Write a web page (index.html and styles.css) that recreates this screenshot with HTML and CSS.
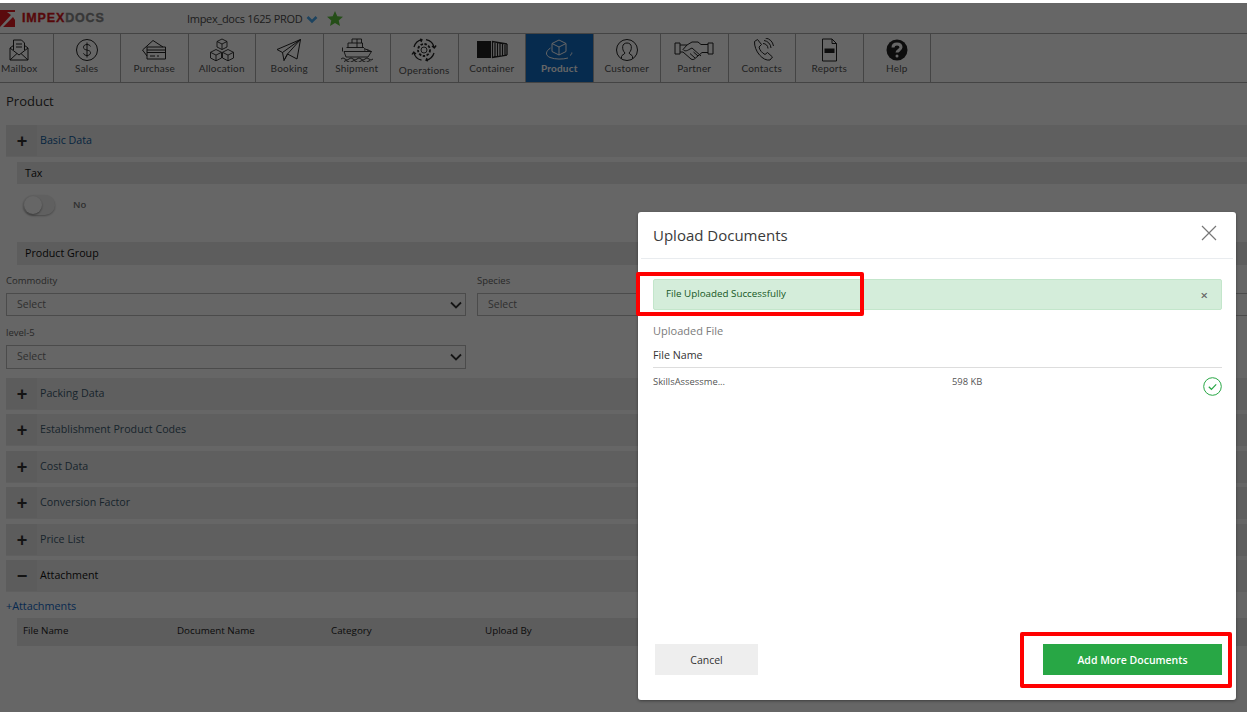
FILE: index.html
```html
<!DOCTYPE html>
<html lang="en">
<head>
<meta charset="utf-8">
<title>Product</title>
<link rel="stylesheet" href="styles.css">
</head>
<body>
<div class="page">
  <header class="topbar">
    <div class="logo">
      <svg class="logo-mark" width="15" height="17" viewBox="0 0 15 17"><path fill="#e01b22" d="M0 0h15v17H0z"/><path fill="#fff" d="M0 17 11 5 7 2h8v8l-2-3L3 17z"/></svg>
      <span class="logo-text"><b class="logo-red">IMPEX</b><b class="logo-grey">DOCS</b></span>
    </div>
    <div class="tenant">Impex_docs 1625 PROD</div>
    <svg class="chev" width="12" height="9" viewBox="0 0 12 9"><path d="M1.500 2 6 6.500 10.500 2" fill="none" stroke="#4aa8ee" stroke-width="2.600"/></svg>
    <svg class="star" width="16" height="15" viewBox="0 0 16 15"><path fill="#5cc43c" d="M8 0l2.300 5.200 5.700.5-4.300 3.700L13 15 8 12l-5 3 1.300-5.600L0 5.700l5.700-.5z"/></svg>
  </header>

  <nav class="nav">
    <a class="nav-item"><svg class="ic" viewBox="0 0 36 24"><path d="M9 10v12h18V10l-4-3M13 7l-4 3 9 7 9-7M9 22l7-6.500M27 22l-7-6.500M12.500 12V2h8l3 3v7M15 6h6M15 9h6"/></svg><span>Mailbox</span></a>
    <a class="nav-item"><svg class="ic" viewBox="0 0 36 24"><circle cx="18" cy="12" r="10.500"/><path d="M21.500 8.500c-.5-1.300-2-2-3.500-2-2 0-3.500 1-3.500 2.800 0 3.800 7 1.800 7 5.400 0 1.800-1.600 2.800-3.500 2.800-1.600 0-3-.8-3.500-2.200M18 4.500v15"/></svg><span>Sales</span></a>
    <a class="nav-item"><svg class="ic" viewBox="0 0 36 24"><path d="M11 18l-4.500-6L17 2.500 27 9M11 9h18.500v12H11zM11 12h18.500M11 14.500h18.500M14 18h5M21 18h2"/></svg><span>Purchase</span></a>
    <a class="nav-item"><svg class="ic ic-thin" viewBox="0 0 36 24"><path d="M18 1l5 2.500V9l-5 2.500L13 9V3.500zM13 3.500l5 2.500 5-2.500M18 6v5.500M12 11.500l5.500 2.800v5.700L12 22.800l-5.500-2.800v-5.700zM6.500 14.300l5.500 2.800 5.500-2.800M12 17.100v5.700M24 11.500l5.500 2.800v5.700L24 22.800 18.500 20v-5.700zM18.500 14.300l5.500 2.800 5.500-2.800M24 17.100v5.700"/></svg><span>Allocation</span></a>
    <a class="nav-item"><svg class="ic" viewBox="0 0 36 24"><path d="M6 11.500L29.500 1.500 26 21l-9.500-5-3.500 6.500-1.500-8zM11.500 14.500L29.500 1.500 16.500 16M13 22.500l3.500-6.500"/></svg><span>Booking</span></a>
    <a class="nav-item"><svg class="ic ic-thin" viewBox="0 0 36 24"><path d="M13 5V1h5v4M18 1h4.500v4M9 9.500V5h9v4.500M18 5h5.500v4.500M7.500 9.500h17.500M3.500 9.500v4M5 13.500h27.500L29 19H7zM25 10.500l7.500 3M25 12h1.500M28 12h1.500"/><path d="M2 21q2-2.200 4 0t4 0 4 0 4 0 4 0 4 0 4 0 4 0M5 23.500q2-2 4 0t4 0 4 0 4 0 4 0 4 0 2 0"/></svg><span>Shipment</span></a>
    <a class="nav-item nav-low"><svg class="ic ic-thin" viewBox="0 0 36 24"><circle cx="18" cy="12" r="3"/><circle cx="18" cy="12" r="6" stroke-width="1.800" stroke-dasharray="2.500 1.500"/><path stroke-width="1.300" d="M20 1.700A10.500 10.500 0 0 1 28.300 10M28 15a10.500 10.500 0 0 1-8 7.300M15.500 22.200A10.500 10.500 0 0 1 7.700 14M8 9a10.500 10.500 0 0 1 8-7.300M26 8l2.300 2 1.800-2.500M22 22.800l-2-.5 1-2.300M10 16l-2.300-2L6 16.500M14 1l2 .7-1 2.300"/></svg><span>Operations</span></a>
    <a class="nav-item"><svg class="ic ic-thin" viewBox="0 0 36 24"><path class="solid" d="M3 3h14v17H3z"/><path stroke-width="1.300" d="M18.500 3v17M21 3.500v16M23.500 4v15M26 4.500v14M28.500 5v13M31 5.500v12M33 6v11M18 3.500l15 2.500M18 19.500l15-2.500"/></svg><span>Container</span></a>
    <a class="nav-item nav-active"><svg class="ic ic-light" viewBox="0 0 36 24"><path d="M18 2l7 3.500v8L18 17l-7-3.500v-8zM11 5.500l7 3.500 7-3.500M18 9v8"/><path stroke-width="1" d="M9.500 10C5 13 3.500 17 9 19.500c5 2 13 2 18 .5M29 17.500c1.500-1 2-2 1.800-3"/></svg><span>Product</span></a>
    <a class="nav-item"><svg class="ic" viewBox="0 0 36 24"><circle cx="18" cy="12" r="10.500"/><path d="M12.500 20.500v-2c0-1.500 3-2 3.500-3.500-2-2-2.500-4-2.300-6.500.2-2.200 2-3.500 4.300-3.500s4.100 1.300 4.300 3.500c.2 2.500-.3 4.500-2.300 6.500.5 1.500 3.500 2 3.500 3.500v2"/></svg><span>Customer</span></a>
    <a class="nav-item"><svg class="ic ic-wide" viewBox="0 0 40 24"><path d="M1 5h5v11H1zM34 5h5v11h-5zM6 7h7l5-3 6 0 3 2.500h7M6 14h3l8 7c1.500 1 3 .5 4-.5l7-6h6M13 7l-4 4.500c1.500 2 4 1.500 6 0l3-1.500 9 8M21 20l-5-4.500M24 18l-4.500-4"/></svg><span>Partner</span></a>
    <a class="nav-item"><svg class="ic" viewBox="0 0 36 24"><path d="M10.500 3.500l3-2 4 5-2.500 2.500c.5 3 3 6 6 7.500l2.500-2 5 4.500-2.500 3c-7 1.500-16-9-15.500-18.500z"/><path d="M19 5.500a5 5 0 0 1 5 5M20 2.500a8 8 0 0 1 7 7.500M21.500 0a10 10 0 0 1 8 8"/></svg><span>Contacts</span></a>
    <a class="nav-item"><svg class="ic" viewBox="0 0 36 24"><path d="M11.500 1h9.500l4.500 4.500V23h-14zM21 1v4.500h4.500"/><path class="solid" d="M13.500 10.500h10V15h-10z"/></svg><span>Reports</span></a>
    <a class="nav-item"><svg class="ic" viewBox="0 0 36 24"><circle class="solid" cx="18" cy="12" r="10.500"/><path class="help-mark" d="M14 9.500c0-2.200 1.700-3.500 4-3.500s4 1.300 4 3.300c0 2.700-4 2.900-4 5.200"/><circle class="help-dot" cx="18" cy="18" r="1.500"/></svg><span>Help</span></a>
  </nav>

  <main class="content">
    <h1 class="title">Product</h1>

    <div class="bar bar-first"><span class="toggle-box">+</span><span class="bar-link">Basic Data</span></div>
    <div class="sub sub-tax">Tax</div>
    <div class="switch-row"><span class="switch"><span class="knob"></span></span><span class="switch-label">No</span></div>
    <div class="sub sub-group">Product Group</div>
    <div class="fields">
      <label class="field"><span class="field-label">Commodity</span><span class="select">Select<svg class="caret" width="12" height="8" viewBox="0 0 12 8"><path d="M1 1.500l5 5 5-5" fill="none" stroke="#333" stroke-width="1.800"/></svg></span></label>
      <label class="field"><span class="field-label">Species</span><span class="select">Select<svg class="caret" width="12" height="8" viewBox="0 0 12 8"><path d="M1 1.500l5 5 5-5" fill="none" stroke="#333" stroke-width="1.800"/></svg></span></label>
      <label class="field"><span class="field-label">Level-3</span><span class="select">Select<svg class="caret" width="12" height="8" viewBox="0 0 12 8"><path d="M1 1.500l5 5 5-5" fill="none" stroke="#333" stroke-width="1.800"/></svg></span></label>
      <label class="field field-low"><span class="field-label">level-5</span><span class="select select-tall">Select<svg class="caret" width="12" height="8" viewBox="0 0 12 8"><path d="M1 1.500l5 5 5-5" fill="none" stroke="#333" stroke-width="1.800"/></svg></span></label>
    </div>

    <div class="bars">
      <div class="bar"><span class="toggle-box">+</span><span class="bar-text">Packing Data</span></div>
      <div class="bar"><span class="toggle-box">+</span><span class="bar-text">Establishment Product Codes</span></div>
      <div class="bar"><span class="toggle-box">+</span><span class="bar-text">Cost Data</span></div>
      <div class="bar"><span class="toggle-box">+</span><span class="bar-text">Conversion Factor</span></div>
      <div class="bar"><span class="toggle-box">+</span><span class="bar-text">Price List</span></div>
      <div class="bar"><span class="toggle-box">&minus;</span><span class="bar-dark">Attachment</span></div>
    </div>
    <a class="add-link">+Attachments</a>
    <div class="thead"><span>File Name</span><span>Document Name</span><span>Category</span><span>Upload By</span></div>
  </main>

  <div class="overlay"></div>

  <section class="modal">
    <div class="modal-head">
      <h2 class="modal-title">Upload Documents</h2>
      <svg class="close" width="16" height="16" viewBox="0 0 16 16"><path d="M1 1l14 14M15 1L1 15" stroke="#777" stroke-width="1.200" fill="none"/></svg>
    </div>
    <div class="modal-body">
      <div class="alert"><span class="alert-text">File Uploaded Successfully</span><span class="alert-x">&times;</span></div>
      <div class="up-title">Uploaded File</div>
      <div class="up-head">File Name</div>
      <div class="up-row">
        <span class="up-name">SkillsAssessme...</span>
        <span class="up-size">598 KB</span>
        <svg class="up-ok" width="19" height="19" viewBox="0 0 19 19"><circle cx="9.500" cy="9.500" r="8.800" fill="none" stroke="#28a745" stroke-width="1"/><path d="M5.800 9.800l2.600 2.500 4.800-5" fill="none" stroke="#28a745" stroke-width="1.200"/></svg>
      </div>
    </div>
    <div class="modal-foot">
      <button class="btn btn-cancel">Cancel</button>
      <button class="btn btn-add">Add More Documents</button>
    </div>
  </section>

  <div class="mark mark-alert"></div>
  <div class="mark mark-add"></div>
</div>
</body>
</html>
```
FILE: styles.css
```css
* { box-sizing: border-box; }
html, body { margin: 0; padding: 0; height: 100%; overflow: hidden; background: #fff; }
body { font-family: "Open Sans", "Liberation Sans", sans-serif; color: #333; padding-top: 3px; }
.page { position: relative; height: 709px; overflow: hidden; background: #fff; }

.topbar { height: 30px; display: flex; align-items: center; }
.logo { width: 187px; display: flex; align-items: center; flex: none; }
.logo-mark { display: block; }
.logo-text { margin-left: 7px; font: 900 12.500px "Liberation Sans", sans-serif; letter-spacing: .85px; -webkit-text-stroke: .35px currentColor; }
.logo-red { color: #d8161c; }
.logo-grey { color: #8a8a8a; }
.tenant { font-size: 11px; color: #4b4b4b; width: 119px; letter-spacing: -.3px; white-space: nowrap; }
.chev { margin: 2px 0 0 0; }
.star { margin-left: 9px; }

.nav { height: 50px; display: flex; border-top: 1px solid #aaa; border-bottom: 1px solid #aaa; margin-left: -14px; }
.nav-item { width: 67.500px; flex: none; border-right: 1px solid #aaa; display: flex; flex-direction: column; align-items: center; padding-top: 4px; font: 10px Lato, "Liberation Sans", sans-serif; letter-spacing: .2px; color: #555; }
.nav-item span { margin-top: -1px; line-height: 14px; white-space: nowrap; }
.nav-low span { margin-top: 1px; }
.nav-active { background: #0f6bc3; color: #fff; font-weight: 700; }
.ic { width: 36px; height: 24px; display: block; fill: none; stroke: #222; stroke-width: 1; stroke-linejoin: round; }
.ic-thin { stroke-width: .9; }
.ic-wide { width: 40px; }
.ic-light { stroke: #fff; }
.ic .solid { fill: #222; stroke: none; }
.ic .help-mark { stroke: #fff; stroke-width: 3; }
.ic .help-dot { fill: #fff; stroke: none; }

.content { overflow: hidden; }
.title { margin: 0; height: 42px; padding: 9px 0 0 6px; font-size: 13px; font-weight: 400; line-height: 18px; color: #333; }
.bar { height: 32px; margin: 0 0 4.450px 6px; background: #eee; display: flex; font-size: 10.700px; }
.bar-first { margin-bottom: 5px; }
.toggle-box { width: 31px; height: 31px; flex: none; background: #e6e6e6; color: #333; font: 700 18px/33px "Liberation Sans", sans-serif; text-align: center; padding-left: 1px; }
.bar-link, .bar-text, .bar-dark { margin: 8px 0 0 3px; line-height: 15px; }
.bar-link { color: #0f5c9e; }
.bar-text { color: #3d5a6e; }
.bar-dark { color: #111; }
.bars { margin-top: 8.500px; }
.sub { margin-left: 17px; padding-left: 8px; background: #e8e8e8; font-size: 10.700px; font-weight: 500; color: #111; display: flex; align-items: center; }
.sub-tax { height: 22px; }
.sub-group { height: 23px; padding-bottom: 2px; }
.switch-row { height: 58px; padding: 11px 0 0 23px; display: flex; align-items: flex-start; }
.switch { width: 32px; height: 20px; border-radius: 10px; background: #f0f0f0; box-shadow: 0 1px 2px rgba(0,0,0,.3); display: block; flex: none; }
.knob { display: block; width: 18px; height: 18px; margin: 1px; border-radius: 50%; background: #fff; box-shadow: 0 1px 2px rgba(0,0,0,.4); }
.switch-label { margin: 3px 0 0 18px; font-size: 9.500px; line-height: 14px; color: #777; font-weight: 600; }
.fields { display: grid; grid-template-columns: 460px 460px 460px; column-gap: 11px; margin-left: 6px; }
.field { display: block; height: 51.500px; padding-top: 9px; }
.field-low { grid-column: 1; height: 53px; padding-top: 9px; }
.field-label { display: block; font-size: 9.500px; line-height: 14px; color: #666; height: 19px; }
.select { height: 23px; border: 1px solid #bbb; display: flex; align-items: center; justify-content: space-between; padding: 0 3px 2px 10px; font-size: 10.500px; color: #777; background: #fff; }
.select-tall { height: 24px; }
.caret { flex: none; margin-top: 2px; }
.add-link { display: block; margin: 0 0 0 6px; height: 21.300px; line-height: 17px; font-size: 10.800px; color: #1268c7; }
.thead { margin-left: 17px; height: 28px; padding-bottom: 2px; background: #e8e8e8; display: grid; grid-template-columns: repeat(4, 154px); padding-left: 6px; align-items: center; font-size: 9.800px; font-weight: 500; color: #222; }

.overlay { position: absolute; inset: 0; background: rgba(0,0,0,.6); }

.modal { position: absolute; left: 638px; top: 209px; width: 598px; height: 488px; background: #fff; border-radius: 3px; display: flex; flex-direction: column; box-shadow: 0 1px 3px rgba(0,0,0,.4); }
.modal-head { height: 47px; margin: 0 3px; padding: 0 16px 0 12px; border-bottom: 1px solid #e9ecef; display: flex; align-items: center; justify-content: space-between; }
.modal-title { margin: 0; font-size: 15px; font-weight: 500; color: #3a3a3a; }
.close { margin-bottom: 4px; }
.modal-body { padding: 20px 14px 0 15px; flex: 1; }
.alert { height: 31px; background: #d4edda; border: 1px solid #c3e6cb; border-radius: 2px; padding: 0 13px 0 12px; display: flex; align-items: center; justify-content: space-between; font-size: 9.800px; color: #155724; }
.alert-text { margin-bottom: 2px; }
.alert-x { font-size: 13px; font-weight: 600; color: #666; }
.up-title { margin-top: 13px; font-size: 11px; line-height: 15px; font-weight: 500; color: #7b7b7b; }
.up-head { margin-top: 10px; height: 20px; line-height: 15px; font-size: 10.700px; font-weight: 500; color: #333; border-bottom: 1px solid #ddd; }
.up-row { position: relative; display: flex; height: 36px; padding-top: 7px; font-size: 9.400px; line-height: 14px; color: #555; }
.up-name { width: 299px; }
.up-ok { position: absolute; right: 0; top: 9px; }
.modal-foot { height: 56px; padding: 0 14px 25px 17px; display: flex; justify-content: space-between; }
.btn { border: 0; height: 31px; font-family: inherit; font-size: 10.500px; padding: 0; }
.btn-cancel { width: 103px; background: #eee; color: #333; }
.btn-add { width: 179px; background: #28a745; color: #fff; font-weight: 600; }

.mark { position: absolute; border: 4px solid #f00; border-radius: 2px; }
.mark-alert { left: 636px; top: 269px; width: 228px; height: 44px; }
.mark-add { left: 1020px; top: 629px; width: 212px; height: 56px; }
```
